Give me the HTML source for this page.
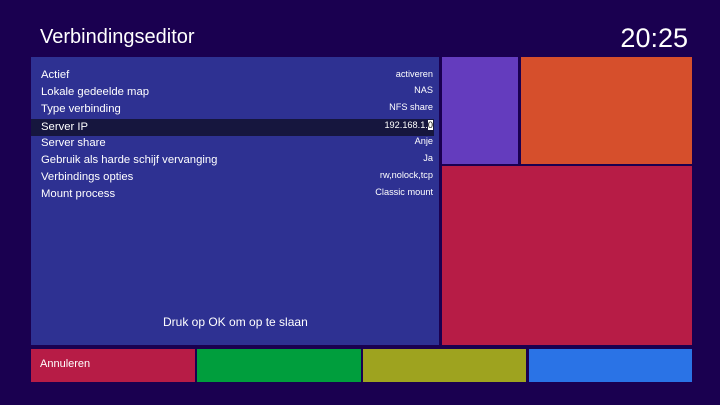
<!DOCTYPE html>
<html><head><meta charset="utf-8"><style>
*{margin:0;padding:0;box-sizing:border-box}
body{width:720px;height:405px;background:#1a0050;position:relative;overflow:hidden;font-family:"Liberation Sans",sans-serif;color:#fff}
.a{position:absolute}
.lbl{position:absolute;left:41px;font-size:11.3px;line-height:17px;white-space:nowrap}
.val{position:absolute;right:287px;font-size:9.2px;line-height:17px;white-space:nowrap;text-align:right}
</style></head><body>
<div class="a" style="left:40px;top:26px;font-size:20px">Verbindingseditor</div>
<div class="a" style="right:32px;top:23px;font-size:27px">20:25</div>
<div class="a" style="left:31px;top:57px;width:408px;height:288px;background:#2e3192"></div>
<div class="a" style="left:31px;top:119px;width:403px;height:17px;background:#16163e"></div>
<div class="a" style="left:442px;top:57px;width:76px;height:107px;background:#643cbe"></div>
<div class="a" style="left:521px;top:57px;width:171px;height:107px;background:#d64f2c"></div>
<div class="a" style="left:442px;top:166px;width:250px;height:179px;background:#b71c46"></div>
<div class="lbl" style="top:67px">Actief</div>
<div class="lbl" style="top:84px">Lokale gedeelde map</div>
<div class="lbl" style="top:101px">Type verbinding</div>
<div class="lbl" style="top:119px">Server IP</div>
<div class="lbl" style="top:135px">Server share</div>
<div class="lbl" style="top:152px">Gebruik als harde schijf vervanging</div>
<div class="lbl" style="top:169px">Verbindings opties</div>
<div class="lbl" style="top:186px">Mount process</div>
<div class="val" style="top:66px">activeren</div>
<div class="val" style="top:82px">NAS</div>
<div class="val" style="top:99px">NFS share</div>
<div class="val" style="top:117px">192.168.1.<span style="background:#fff;color:#000">0</span></div>
<div class="val" style="top:133px">Anje</div>
<div class="val" style="top:150px">Ja</div>
<div class="val" style="top:167px">rw,nolock,tcp</div>
<div class="val" style="top:184px">Classic mount</div>
<div class="a" style="left:163px;top:315px;font-size:12px">Druk op OK om op te slaan</div>
<div class="a" style="left:31px;top:349px;width:164px;height:33px;background:#b71c46"></div>
<div class="a" style="left:40px;top:358px;font-size:11px">Annuleren</div>
<div class="a" style="left:197px;top:349px;width:164px;height:33px;background:#009e3d"></div>
<div class="a" style="left:363px;top:349px;width:163px;height:33px;background:#9ea31f"></div>
<div class="a" style="left:529px;top:349px;width:163px;height:33px;background:#2a73e6"></div>
</body></html>
